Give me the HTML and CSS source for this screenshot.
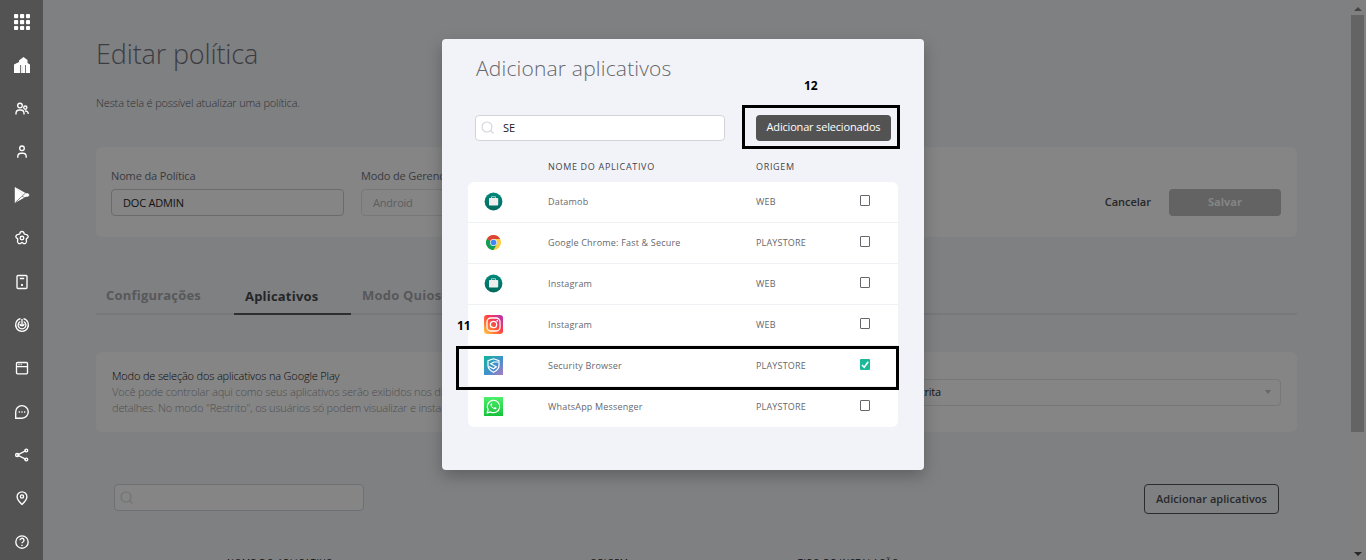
FILE: index.html
```html
<!DOCTYPE html>
<html lang="pt-BR">
<head>
<meta charset="utf-8">
<title>Editar política</title>
<link rel="stylesheet" href="styles.css">
</head>
<body>
<svg width="0" height="0" class="defs">
  <defs>
    <linearGradient id="bag" x1="0" y1="0" x2="0" y2="1"><stop offset="0" stop-color="#00897b"/><stop offset="1" stop-color="#00695c"/></linearGradient>
    <linearGradient id="insta" x1="0" y1="1" x2="1" y2="0"><stop offset="0" stop-color="#ffd34f"/><stop offset=".3" stop-color="#ff7a35"/><stop offset=".6" stop-color="#f9394f"/><stop offset="1" stop-color="#b032c4"/></linearGradient>
    <linearGradient id="sec" x1="0" y1="0" x2="1" y2="1"><stop offset="0" stop-color="#12b59a"/><stop offset=".55" stop-color="#4290cf"/><stop offset="1" stop-color="#b07ac0"/></linearGradient>
    <linearGradient id="wa" x1="0" y1="0" x2="0" y2="1"><stop offset="0" stop-color="#4cf06a"/><stop offset="1" stop-color="#17c23b"/></linearGradient>
    <symbol id="briefcase" viewBox="0 0 19 19"><circle cx="9.500" cy="9.500" r="8.900" fill="url(#bag)"/><path d="M7.500 6V4.700h4V6" fill="none" stroke="#9ccfc8" stroke-width="1"/><rect x="5" y="6" width="9.200" height="7.500" rx=".8" fill="#eee"/></symbol>
  </defs>
</svg>
<div class="app">
  <nav class="sidebar">
    <svg class="ico" viewBox="0 0 16 16"><g fill="#fff"><rect width="4.200" height="4.200" rx=".9"/><rect x="6" width="4.200" height="4.200" rx=".9"/><rect x="12" width="4" height="4.200" rx=".9"/><rect y="6" width="4.200" height="4.200" rx=".9"/><rect x="6" y="6" width="4.200" height="4.200" rx=".9"/><rect x="12" y="6" width="4" height="4.200" rx=".9"/><rect y="12" width="4.200" height="4" rx=".9"/><rect x="6" y="12" width="4.200" height="4" rx=".9"/><rect x="12" y="12" width="4" height="4" rx=".9"/></g></svg>
    <svg class="ico" viewBox="0 0 16 16"><path d="M0 16V7.500L5 5V3.500L9.500 0l4 3v3L16 7.500V16z" fill="#fff"/><path d="M6.500 8v8M11.500 8v8" stroke="#777" stroke-width="1"/><path d="M8 8.500v7.500" stroke="#ddd" stroke-width="1"/></svg>
    <svg class="ico line" viewBox="0 0 16 16"><circle cx="6" cy="4.500" r="2.300"/><path d="M2 13.500v-1.300A3.300 3.300 0 0 1 5.300 9h1.400A3.300 3.300 0 0 1 10 12.200v1.300"/><circle cx="11.300" cy="6.600" r="1.600"/><path d="M11 10h.6a2.500 2.500 0 0 1 2.600 2.500v.5"/></svg>
    <svg class="ico line" viewBox="0 0 16 16"><circle cx="8" cy="4.300" r="2.300"/><path d="M3.800 13.800v-1.300A3.300 3.300 0 0 1 7.100 9.200h1.800a3.300 3.300 0 0 1 3.300 3.300v1.300"/></svg>
    <svg class="ico" viewBox="0 0 16 16"><path d="M.8 0 12 6.200 14 6.200 15.500 8 14 9.800 12 9.800 .8 16z" fill="#fff"/><path d="M1.500 15.300 11.500 6M8.300 9.300 11 11" fill="none" stroke="#666" stroke-width=".8"/><path d="M1.500 .8 9.500 8" fill="none" stroke="#ccc" stroke-width=".5"/></svg>
    <svg class="ico line" viewBox="0 0 16 16"><path d="M6 3.500Q6 1.500 8 1.500T10 3.500Q10.500 4.500 11.800 4.400 13.800 4.500 14.200 6.300 14.200 7.800 12.600 8.600 11.900 9.200 12.400 10.300 13 12.500 11.500 13.400 10 14 8.800 12.900 8 12.300 7.200 12.900 6 14 4.500 13.400 3 12.500 3.600 10.300 4.100 9.200 3.400 8.600 1.800 7.800 1.800 6.300 2.200 4.500 4.200 4.400 5.500 4.500 6 3.500z"/><circle cx="8" cy="8" r="1.800"/></svg>
    <svg class="ico line" viewBox="0 0 16 16"><rect x="3" y="1.500" width="10" height="13" rx="1"/><path d="M5.800 4.500h4.400M7 11h2"/><path d="M8 10v2" /></svg>
    <svg class="ico line" viewBox="0 0 16 16"><path d="M9.500 1.700A6.400 6.400 0 1 1 6.500 1.700"/><path d="M9.700 4.500a3.900 3.900 0 1 1-3.400 0"/><path d="M8 2v6.300M6 6.800a2 2 0 1 0 4 0"/></svg>
    <svg class="ico line" viewBox="0 0 16 16"><rect x="2.500" y="2.500" width="11" height="11.300" rx="1"/><path d="M2.500 6.600h11M4.500 4.500h1M6.700 4.500h1"/></svg>
    <svg class="ico line" viewBox="0 0 16 16"><path d="M1.700 14.200V8A6.300 6.300 0 1 1 8 14.200z"/><path d="M4.700 8h1.200M7.400 8h1.200M10.100 8h1.200"/></svg>
    <svg class="ico line" viewBox="0 0 16 16"><path d="M12 3.700 3.500 8l8.500 4.300"/><circle cx="12.300" cy="3.500" r="1.400"/><circle cx="3.200" cy="8" r="1.600"/><circle cx="12.300" cy="12.500" r="1.400"/></svg>
    <svg class="ico line" viewBox="0 0 16 16"><path d="M8 14.400C5 11.600 3.100 9.200 3.100 6.700a4.900 4.900 0 0 1 9.800 0c0 2.500-1.900 4.900-4.900 7.700z"/><circle cx="8" cy="6.500" r="1.600"/></svg>
    <svg class="ico line" viewBox="0 0 16 16"><circle cx="8" cy="8" r="6.200"/><path d="M6 6.300a2 2 0 1 1 3 1.700q-1 .5-1 1.300M8 10.800v1.300"/></svg>
  </nav>
  <main class="page">
    <h1 class="title">Editar política</h1>
    <p class="subtitle">Nesta tela é possível atualizar uma política.</p>
    <section class="card form">
      <label class="field"><span class="label">Nome da Política</span><span class="input dark">DOC ADMIN</span></label>
      <label class="field"><span class="label">Modo de Gerenciamento</span><span class="input faint">Android</span></label>
      <div class="actions"><span class="cancel">Cancelar</span><span class="save">Salvar</span></div>
    </section>
    <div class="tabs"><span class="tab first">Configurações</span><span class="tab active">Aplicativos</span><span class="tab third">Modo Quiosque</span></div>
    <section class="card mode">
      <div class="mode-text"><p class="mode-title">Modo de seleção dos aplicativos na Google Play</p><p>Você pode controlar aqui como seus aplicativos serão exibidos nos dispositivos</p><p>detalhes. No modo "Restrito", os usuários só podem visualizar e instalar</p></div>
      <div class="select"><span>Lista restrita</span><i class="caret"></i></div>
    </section>
    <div class="toolbar">
      <div class="search back"><svg class="mag" viewBox="0 0 14 14"><circle cx="6" cy="6" r="5"/><path d="M9.700 9.700 12.500 12.500"/></svg></div>
      <span class="outline">Adicionar aplicativos</span>
    </div>
    <div class="back-head"><span>NOME DO APLICATIVO</span><span>ORIGEM</span><span>TIPO DE INSTALAÇÃO</span></div>
  </main>
  <div class="scroll"><i class="arrow up"></i><i class="thumb"></i><i class="arrow down"></i></div>
</div>
<div class="modal">
  <h2 class="modal-title">Adicionar aplicativos</h2>
  <div class="modal-bar">
    <div class="search front"><svg class="mag" viewBox="0 0 14 14"><circle cx="6" cy="6" r="5"/><path d="M9.700 9.700 12.500 12.500"/></svg><span>SE</span></div>
    <span class="add">Adicionar selecionados</span>
  </div>
  <div class="grid head"><span></span><span>NOME DO APLICATIVO</span><span>ORIGEM</span></div>
  <div class="list">
    <div class="grid row"><svg class="app-ico"><use href="#briefcase"/></svg><span>Datamob</span><span>WEB</span><i class="check"></i></div>
    <div class="grid row"><svg class="app-ico" viewBox="0 0 19 19"><circle cx="9.500" cy="9.500" r="7.500" fill="#fc4"/><path d="M9.500 9.500 3 5.750A7.500 7.500 0 0 0 9.500 17L12.800 11.300z" fill="#0f9d58"/><path d="M3 5.750A7.500 7.500 0 0 1 16.100 6H9.500L6 8z" fill="#db4437"/><circle cx="9.500" cy="9.500" r="3.500" fill="#f1f1f1"/><circle cx="9.500" cy="9.500" r="2.800" fill="#4285f4"/></svg><span>Google Chrome: Fast &amp; Secure</span><span>PLAYSTORE</span><i class="check"></i></div>
    <div class="grid row"><svg class="app-ico"><use href="#briefcase"/></svg><span>Instagram</span><span>WEB</span><i class="check"></i></div>
    <div class="grid row"><svg class="app-ico" viewBox="0 0 19 19"><rect width="19" height="19" rx="3" fill="url(#insta)"/><g fill="none" stroke="#fff" stroke-width="1.300"><rect x="3" y="3" width="13" height="13" rx="3.800"/><circle cx="9.500" cy="9.500" r="3.200"/></g><circle cx="13.300" cy="5.700" r=".9" fill="#fff"/></svg><span>Instagram</span><span>WEB</span><i class="check"></i></div>
    <div class="grid row"><svg class="app-ico" viewBox="0 0 19 19"><rect width="19" height="19" fill="url(#sec)"/><g fill="none" stroke="#fff" stroke-width="1.200"><path d="M9.500 2.800 15 4.700V9.500q0 4-5.500 6.800Q4 13.500 4 9.500V4.700z"/><path d="M14.500 6 9.800 6 6.800 7.800 12.300 10.800 9.500 12.800 4.800 10.500"/></g></svg><span>Security Browser</span><span>PLAYSTORE</span><i class="check on"><svg viewBox="0 0 10 11"><path d="M2 6 4.200 8.300 8.200 2.700" fill="none" stroke="#fff" stroke-width="1.500"/></svg></i></div>
    <div class="grid row"><svg class="app-ico" viewBox="0 0 19 19"><rect width="19" height="19" fill="url(#wa)"/><path d="M3.200 15.800 4.100 12.500A6.200 6.200 0 1 1 6.500 14.900z" fill="none" stroke="#fff" stroke-width="1.200"/><path d="M7.300 6.200q-1.300.9-.6 2.600 1.300 2.700 4 3.500 1.600.2 2-1.300l-1.800-1-1 1q-1.700-.7-2.400-2.200l.7-.8-.6-1.800z" fill="#fff"/></svg><span>WhatsApp Messenger</span><span>PLAYSTORE</span><i class="check"></i></div>
  </div>
</div>
<div class="mark box12"></div><div class="mark box11"></div>
<b class="num n12">12</b><b class="num n11">11</b>
</body>
</html>
```
FILE: styles.css
```css
* { box-sizing: border-box; }
body { margin: 0; width: 1366px; height: 560px; overflow: hidden; position: relative; background: #7f8082; font-family: "Open Sans", "Liberation Sans", sans-serif; font-size: 11px; white-space: nowrap; }
h1, h2, p { margin: 0; font-weight: 300; }
.defs { position: absolute; }
.app { display: flex; height: 560px; }
.sidebar { width: 43px; flex: none; background: #535353; display: flex; flex-direction: column; align-items: center; padding: 14px 0 0 1px; gap: 27.300px; }
.ico { width: 16px; height: 16px; flex: none; display: block; }
.line { fill: none; stroke: #fff; stroke-width: 1.350; }
.page { width: 1306px; flex: none; padding: 34px 52px 0 53px; color: #383a3f; }
.title { font-size: 27px; line-height: 40px; color: #3b3c41; letter-spacing: -.15px; }
.subtitle { line-height: 16px; margin-top: 21px; color: #2f3036; letter-spacing: -.16px; }
.card { background: #858585; border-radius: 6px; display: flex; }
.form { height: 90px; margin-top: 36px; padding: 21px 16px 0 15px; gap: 17px; }
.field { width: 233px; display: flex; flex-direction: column; }
.label { line-height: 16px; margin-bottom: 5px; font-weight: 400; letter-spacing: -.14px; }
.input { height: 27px; border: 1px solid #6a6b6d; border-radius: 4px; line-height: 26px; padding-left: 11px; letter-spacing: -.2px; }
.dark { color: #111; }
.faint { border-color: #77787a; color: #5c5d5f; }
.actions { margin-left: auto; margin-top: 21px; display: flex; gap: 18px; line-height: 26px; font-weight: 600; }
.cancel { color: #262729; }
.save { width: 112px; height: 27px; background: #636363; border-radius: 4px; text-align: center; color: #858585; font-weight: 700; }
.tabs { height: 38px; margin-top: 40px; border-bottom: 2px solid #77787b; display: flex; font-size: 13px; font-weight: 700; line-height: 37px; color: #57585a; letter-spacing: .2px; }
.first { width: 138px; padding-left: 10px; }
.active { width: 117px; height: 38px; padding-left: 11px; color: #242628; border-bottom: 2px solid #2c2f30; line-height: 39px; }
.third { padding-left: 11px; }
.mode { height: 80px; margin-top: 37px; padding: 16px 16px 0 16px; justify-content: space-between; }
.mode-text { line-height: 16px; color: #4e4f52; width: 500px; letter-spacing: -.17px; }
.mode-title { color: #080808; }
.select { width: 435px; height: 27px; margin-top: 11px; border: 1px solid #77787a; border-radius: 4px; display: flex; justify-content: space-between; align-items: center; padding: 0 9px 2px 33px; color: #151515; letter-spacing: -.2px; }
.caret { border: 3px solid transparent; border-top: 4px solid #67686a; border-bottom: 0; }
.toolbar { display: flex; justify-content: space-between; padding: 0 18px; margin-top: 52px; }
.search { width: 250px; height: 27px; border: 1px solid #6f7073; border-radius: 4px; display: flex; align-items: center; padding-left: 5px; gap: 8px; }
.back { background: #858585; }
.mag { width: 14px; height: 14px; fill: none; stroke: #717275; stroke-width: 1.100; }
.outline { width: 135px; height: 30px; border: 1px solid #2b2c2e; border-radius: 4px; line-height: 28px; text-align: center; font-weight: 600; color: #27292b; letter-spacing: .05px; }
.back-head { display: grid; grid-template-columns: 363px 208px 200px; padding-left: 131px; margin-top: 41px; font-size: 9px; line-height: 16px; letter-spacing: .65px; color: #111; }
.scroll { width: 17px; margin-left: auto; background: #808080; display: flex; flex-direction: column; align-items: center; padding: 7px 0 4px; }
.thumb { width: 13px; height: 417px; margin: 4px 0 auto; background: #646464; }
.arrow { border: 4px solid transparent; }
.up { border-bottom-color: #444; border-top: 0; border-bottom-width: 4px; }
.down { border-top-color: #282828; border-bottom: 0; }
.modal { position: absolute; left: 442px; top: 39px; width: 482px; height: 431px; background: #f2f3f8; border-radius: 4px; box-shadow: 0 6px 16px rgba(0,0,0,.25); padding: 14px 26px 0; }
.modal-title { font-size: 21px; line-height: 30px; padding-left: 8px; color: #66676c; letter-spacing: .18px; }
.modal-bar { display: flex; justify-content: space-between; padding: 0 7px; margin-top: 31px; }
.front { height: 26px; margin-top: 1px; background: #fff; border-color: #d2d3db; color: #202024; letter-spacing: -.1px; }
.front span { padding-bottom: 1px; }
.front .mag { stroke: #d2d3d8; }
.add { width: 135px; height: 26px; margin-top: 1px; background: #535353; border-radius: 4px; color: #fff; line-height: 24px; text-align: center; letter-spacing: -.18px; }
.grid { display: grid; grid-template-columns: 64px 208px 104px 11px; padding-left: 16px; align-items: center; }
.head { height: 41px; font-size: 9px; letter-spacing: .68px; color: #44454b; padding-top: 9px; }
.list { background: #fff; border-radius: 6px; overflow: hidden; }
.row { height: 41px; border-bottom: 1px solid #eef0f3; padding-bottom: 1px; font-size: 9px; letter-spacing: .19px; color: #66676e; }
.row:last-child { height: 40px; border-bottom: 0; }
.app-ico { width: 19px; height: 19px; display: block; }
.check { width: 10px; height: 11px; border: 1px solid #65666d; border-radius: 1px; margin-top: -2px; }
.on { background: #1bb99a; border: 0; }
.on svg { display: block; width: 10px; height: 11px; }
.mark { position: absolute; border: 3px solid #000; }
.box12 { left: 742px; top: 105px; width: 158px; height: 44px; }
.box11 { left: 456px; top: 346px; width: 443px; height: 44px; }
.num { position: absolute; font: 700 12px/14px "Noto Sans", sans-serif; color: #000; }
.n12 { left: 804px; top: 79px; }
.n11 { left: 457px; top: 319px; }
```
